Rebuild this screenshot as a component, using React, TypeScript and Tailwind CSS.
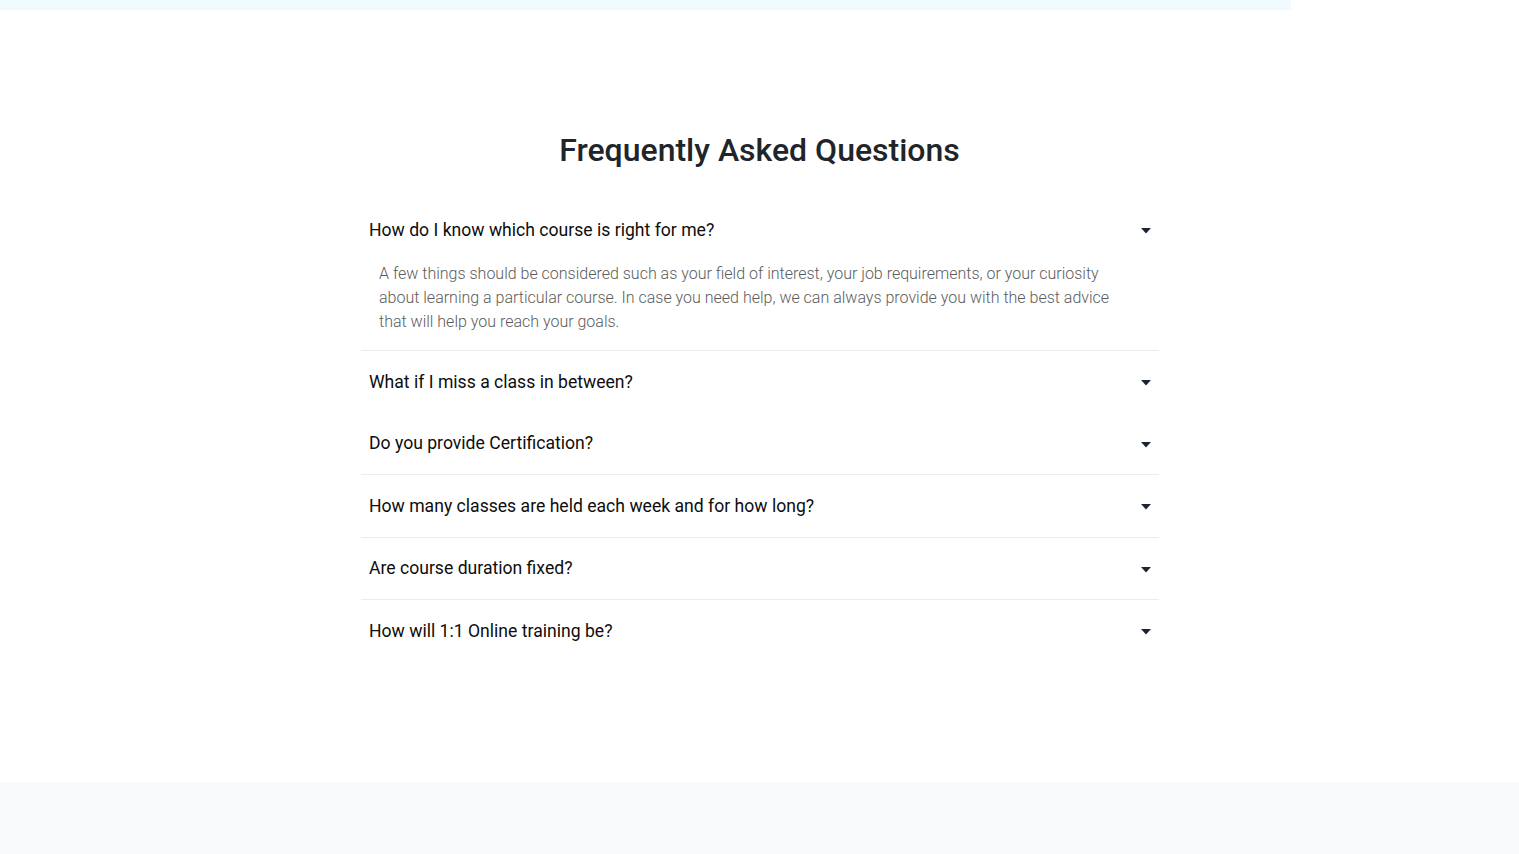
import React from "react";

const items = [
  { q: "How do I know which course is right for me?", open: true, border: true },
  { q: "What if I miss a class in between?", border: false },
  { q: "Do you provide Certification?", border: true },
  { q: "How many classes are held each week and for how long?", border: true },
  { q: "Are course duration fixed?", border: true },
  { q: "How will 1:1 Online training be?", border: false },
];

function Caret() {
  return (
    <svg width="10" height="6" viewBox="0 0 10 6" className="shrink-0 mt-[3px]">
      <path d="M0 0 H10 L5 5.5 Z" fill="#1b2433" />
    </svg>
  );
}

export default function App() {
  return (
    <div className="min-h-screen bg-white" style={{ fontFamily: "Roboto, 'Liberation Sans', sans-serif" }}>
      <div className="h-[10px] w-[1291px] bg-[#f0faff]" />
      <section className="flex flex-col items-center pt-[115px] h-[772px]">
        <h2 className="text-[32px] leading-[50px] font-medium text-[#212529]">
          Frequently Asked Questions
        </h2>
        <div className="mt-[24px] w-[798px] ml-[1px]">
          {items.map((it, i) => (
            <div key={i} className={it.border ? "border-b border-[#ececec]" : ""}>
              <div className="flex h-[61.5px] items-center justify-between pl-[8px] pr-[8px]">
                <span className="text-[17.6px] text-[#0d0d0d] font-normal">{it.q}</span>
                <Caret />
              </div>
              {it.open && (
                <div className="pl-[18px] pr-[18px] pb-[16px] mt-[1.5px] text-[16px] leading-[24px] font-light text-[#5c5c5c]">
                  A few things should be considered such as your field of interest, your job requirements, or your curiosity
                  <br />
                  about learning a particular course. In case you need help, we can always provide you with the best advice
                  <br />
                  that will help you reach your goals.
                </div>
              )}
            </div>
          ))}
        </div>
      </section>
      <div className="h-[72px] bg-[#f8f9fa]" />
    </div>
  );
}
